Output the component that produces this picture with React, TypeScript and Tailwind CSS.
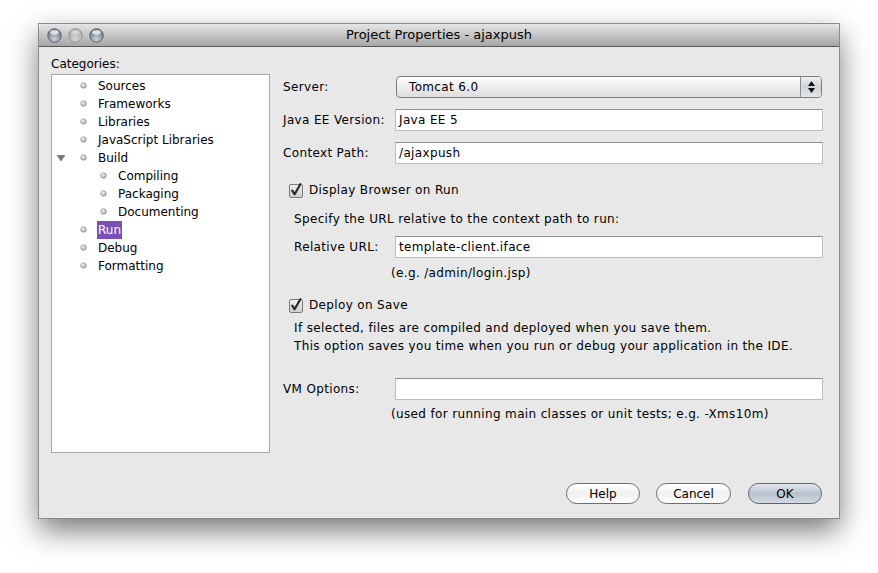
import React from "react";

const FONT = "font-['DejaVu_Sans',sans-serif] text-[12px]";

type Node = { label: string; level: number; expanded?: boolean; selected?: boolean };

const TREE: Node[] = [
  { label: "Sources", level: 1 },
  { label: "Frameworks", level: 1 },
  { label: "Libraries", level: 1 },
  { label: "JavaScript Libraries", level: 1 },
  { label: "Build", level: 1, expanded: true },
  { label: "Compiling", level: 2 },
  { label: "Packaging", level: 2 },
  { label: "Documenting", level: 2 },
  { label: "Run", level: 1, selected: true },
  { label: "Debug", level: 1 },
  { label: "Formatting", level: 1 },
];

function TrafficLight({ dim }: { dim?: boolean }) {
  return (
    <svg width="15" height="15" viewBox="0 0 15 15">
      <defs>
        <radialGradient id={dim ? "tlDim" : "tl"} cx="50%" cy="75%" r="65%">
          <stop offset="0%" stopColor={dim ? "#d6d6d6" : "#c9d2dc"} />
          <stop offset="100%" stopColor={dim ? "#a9a9a9" : "#6c7784"} />
        </radialGradient>
      </defs>
      <circle cx="7.5" cy="7.5" r="6.8" fill={`url(#${dim ? "tlDim" : "tl"})`} stroke={dim ? "#8c8c8c" : "#4f5864"} strokeWidth="0.8" />
      <ellipse cx="7.5" cy="4.3" rx="4.3" ry="2.4" fill="#ffffff" opacity={dim ? 0.45 : 0.7} />
    </svg>
  );
}

function Bullet() {
  return (
    <svg width="7" height="7" viewBox="0 0 7 7" className="-mt-[2px]">
      <defs>
        <radialGradient id="bl" cx="40%" cy="35%" r="70%">
          <stop offset="0%" stopColor="#f4f4f4" />
          <stop offset="100%" stopColor="#a0a0a0" />
        </radialGradient>
      </defs>
      <circle cx="3.5" cy="3.5" r="2.8" fill="url(#bl)" stroke="#8a8a8a" strokeWidth="0.6" />
    </svg>
  );
}

function Checkbox() {
  return (
    <svg width="16" height="16" viewBox="0 0 16 16">
      <defs>
        <linearGradient id="cb" x1="0" y1="0" x2="0" y2="1">
          <stop offset="0%" stopColor="#f2f2f2" />
          <stop offset="100%" stopColor="#c9ccd1" />
        </linearGradient>
      </defs>
      <rect x="1.5" y="2.5" width="13" height="13" rx="1.5" fill="url(#cb)" stroke="#7a7a7a" />
      <path d="M4.2 8.6 L6.6 12.2 L12.4 2.2" fill="none" stroke="#2a2a2a" strokeWidth="2.2" strokeLinejoin="round" strokeLinecap="round" />
    </svg>
  );
}

function Field({ value }: { value?: string }) {
  return (
    <div className="w-[428px] h-[22px] bg-white border border-[#bdbdbd] border-t-[#8f8f8f] flex items-center pl-[3px]">
      {value}
    </div>
  );
}

function Button({ label, primary }: { label: string; primary?: boolean }) {
  return (
    <div
      className={
        "h-[21px] rounded-full border flex items-center justify-center " +
        (primary
          ? "w-[74px] border-[#5b6470] bg-gradient-to-b from-[#e4e9ef] via-[#b9c3cf] to-[#d2d9e2]"
          : label === "Cancel"
          ? "w-[75px] border-[#6e6e6e] bg-gradient-to-b from-[#ffffff] via-[#f1f1f1] to-[#fdfdfd]"
          : "w-[74px] border-[#6e6e6e] bg-gradient-to-b from-[#ffffff] via-[#f1f1f1] to-[#fdfdfd]")
      }
    >
      {label}
    </div>
  );
}

export default function App() {
  return (
    <div className={"w-[878px] h-[573px] bg-white pt-[24px] pl-[39px] text-black " + FONT}>
      <div className="w-[800px] h-[494px] flex flex-col shadow-[0_12px_28px_rgba(0,0,0,0.55)] outline outline-1 outline-[#8a8a8a]">
        {/* title bar */}
        <div className="h-[23px] flex items-center relative bg-gradient-to-b from-[#e6e6e6] to-[#a6a6a6] border-b border-[#585858] rounded-t-[4px]">
          <div className="flex items-center gap-[6px] pl-[8px]">
            <TrafficLight />
            <TrafficLight dim />
            <TrafficLight />
          </div>
          <div className="absolute inset-0 flex items-center justify-center text-[13px]">
            Project Properties - ajaxpush
          </div>
        </div>

        {/* body */}
        <div className="flex-1 bg-[#e8e8e8] flex flex-col">
          <div className="flex pl-[12px]">
            {/* categories */}
            <div className="w-[219px] pt-[8px] flex flex-col">
              <div className="h-[18px] leading-[18px]">Categories:</div>
              <div className="mt-[1px] h-[379px] bg-white border border-[#a9a9a9] pt-[2px]">
                {TREE.map((n) => (
                  <div key={n.label} className="h-[18px] flex items-center">
                    <div className={(n.level === 1 ? "w-[28px]" : "w-[48px]") + " h-full flex items-center pl-[4px]"}>
                      {n.expanded && (
                        <svg width="10" height="8" viewBox="0 0 10 8">
                          <path d="M0.5 1 L9.5 1 L5 7.5 Z" fill="#7a7a7a" />
                        </svg>
                      )}
                    </div>
                    <Bullet />
                    <span
                      className={
                        "h-[18px] leading-[18px] " +
                        (n.selected ? "bg-[#7b4fb7] text-white px-[1px] ml-[10px]" : "ml-[11px]")
                      }
                    >
                      {n.label}
                    </span>
                  </div>
                ))}
              </div>
            </div>

            {/* settings */}
            <div className="ml-[13px] w-[540px] pt-[29px] flex flex-col tracking-[0.35px]">
              <div className="flex items-center h-[22px]">
                <div className="w-[113px]">Server:</div>
                <div className="w-[426px] h-[22px] rounded-[4px] border border-[#7c7c7c] bg-gradient-to-b from-[#fefefe] via-[#eeeeee] to-[#dddddd] flex items-center overflow-hidden">
                  <div className="flex-1 pl-[12px]">Tomcat 6.0</div>
                  <div className="w-[21px] h-full border-l border-[#8c8c8c] bg-gradient-to-b from-[#eef0f3] via-[#cfd4da] to-[#e3e6ea] flex flex-col items-center justify-center gap-[2px]">
                    <svg width="7" height="5" viewBox="0 0 7 5"><path d="M0 5 L3.5 0 L7 5 Z" fill="#111" /></svg>
                    <svg width="7" height="5" viewBox="0 0 7 5"><path d="M0 0 L7 0 L3.5 5 Z" fill="#111" /></svg>
                  </div>
                </div>
              </div>

              <div className="flex items-center mt-[11px]">
                <div className="w-[112px]">Java EE Version:</div>
                <Field value="Java EE 5" />
              </div>

              <div className="flex items-center mt-[11px]">
                <div className="w-[112px]">Context Path:</div>
                <Field value="/ajaxpush" />
              </div>

              <div className="flex items-center mt-[17px] h-[18px] pl-[5px] gap-[5px]">
                <Checkbox />
                <span>Display Browser on Run</span>
              </div>

              <div className="mt-[11px] h-[18px] leading-[18px] pl-[11px]">
                Specify the URL relative to the context path to run:
              </div>

              <div className="flex items-center mt-[8px] pl-[11px]">
                <div className="w-[101px]">Relative URL:</div>
                <Field value="template-client.iface" />
              </div>

              <div className="mt-[6px] h-[18px] leading-[18px] pl-[108px]">(e.g. /admin/login.jsp)</div>

              <div className="flex items-center mt-[14px] h-[18px] pl-[5px] gap-[5px]">
                <Checkbox />
                <span>Deploy on Save</span>
              </div>

              <div className="mt-[5px] pl-[11px] leading-[18px]">
                <div>If selected, files are compiled and deployed when you save them.</div>
                <div>This option saves you time when you run or debug your application in the IDE.</div>
              </div>

              <div className="flex items-center mt-[23px]">
                <div className="w-[112px]">VM Options:</div>
                <Field />
              </div>

              <div className="mt-[5px] h-[18px] leading-[18px] pl-[108px]">
                (used for running main classes or unit tests; e.g. -Xms10m)
              </div>
            </div>
          </div>

          <div className="flex-1" />

          <div className="flex justify-end pr-[17px] pb-[14px]">
            <Button label="Help" />
            <div className="w-[16px]" />
            <Button label="Cancel" />
            <div className="w-[17px]" />
            <Button label="OK" primary />
          </div>
        </div>
      </div>
    </div>
  );
}
